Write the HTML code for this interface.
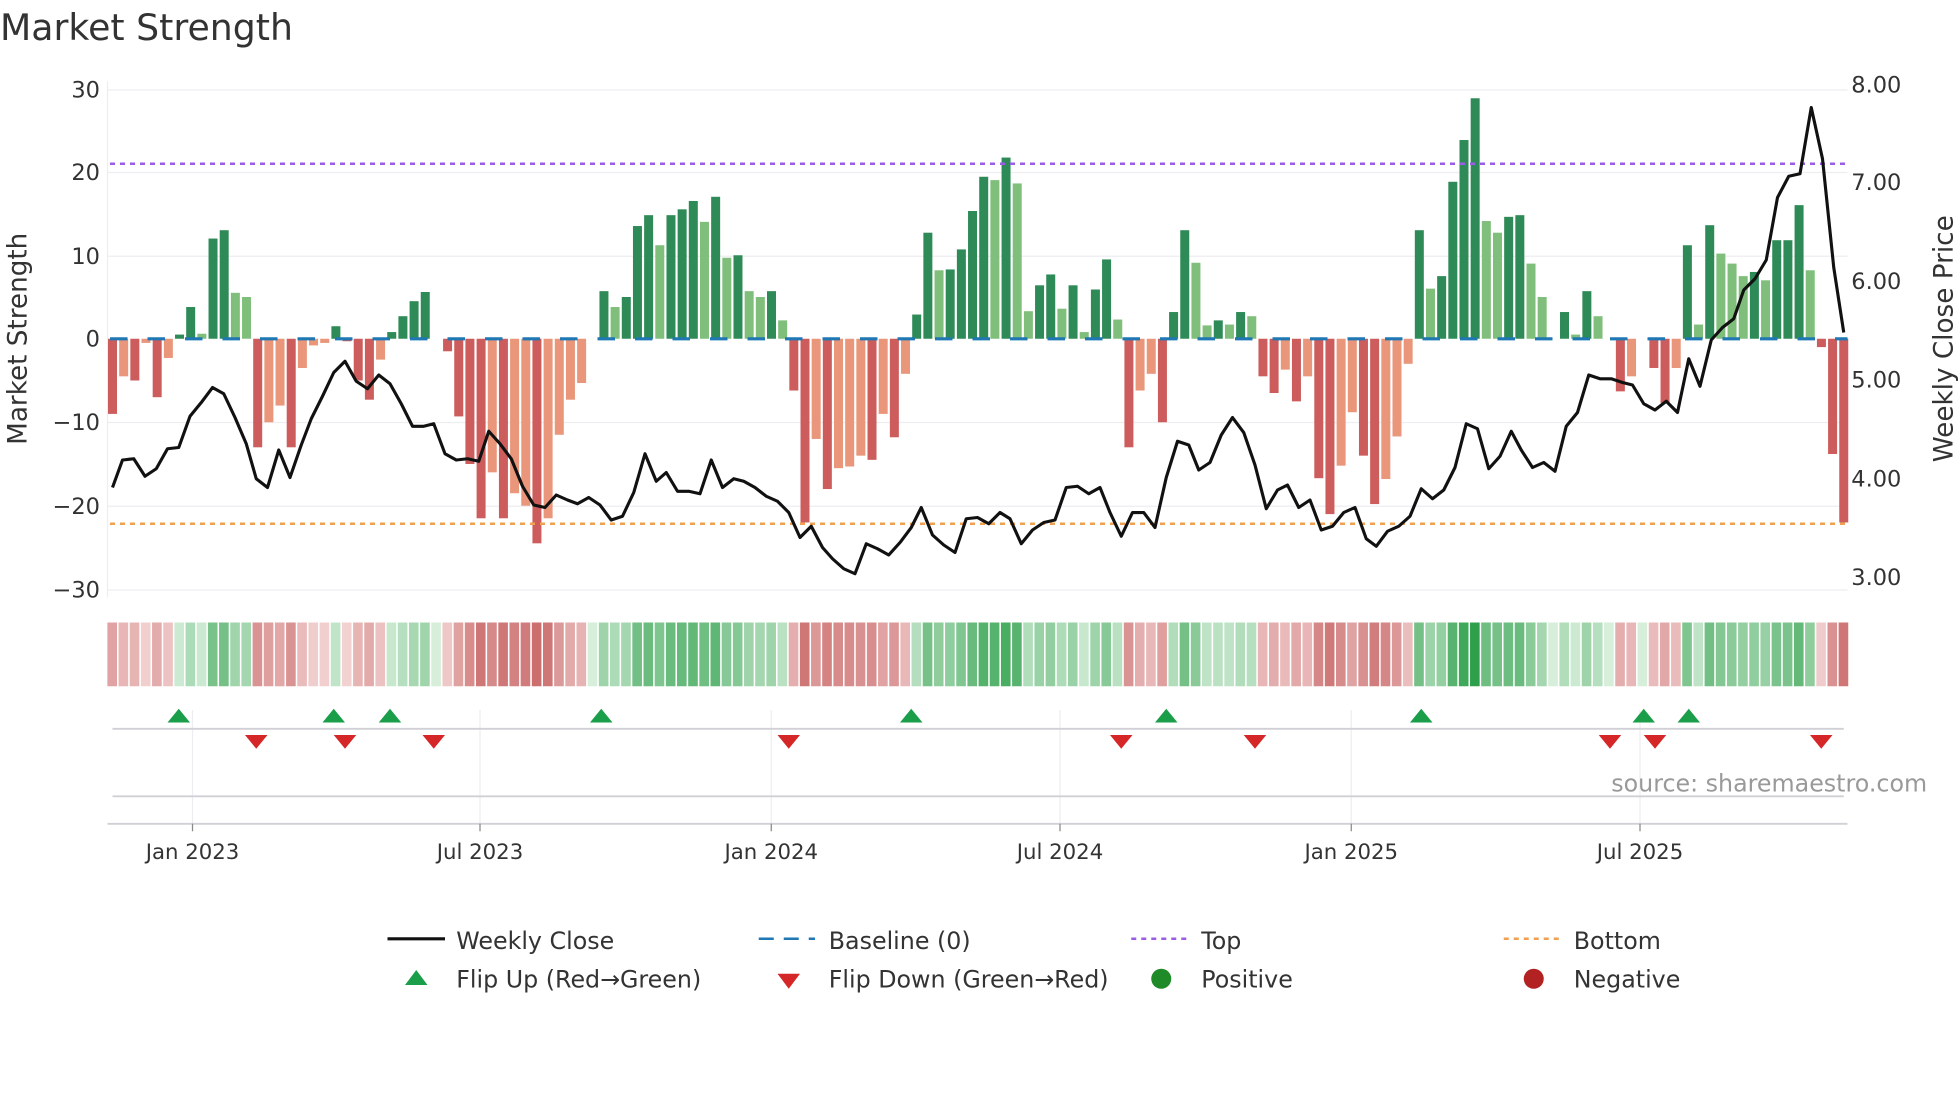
<!DOCTYPE html>
<html><head><meta charset="utf-8">
<style>
html,body{margin:0;padding:0;background:#fff;width:1960px;height:1102px;overflow:hidden}
svg{display:block}
text{font-family:"DejaVu Sans","Liberation Sans",sans-serif;fill:#333}
</style></head>
<body>
<svg id="s" width="1960" height="1102" viewBox="0 0 1568 881.6" xmlns="http://www.w3.org/2000/svg">
<text x="0" y="32" font-size="29">Market Strength</text>
<g stroke="#eeeef2" stroke-width="1">
<line x1="86" y1="72" x2="1478" y2="72"/><line x1="86" y1="138" x2="1478" y2="138"/>
<line x1="86" y1="205" x2="1478" y2="205"/><line x1="86" y1="338" x2="1478" y2="338"/>
<line x1="86" y1="405" x2="1478" y2="405"/><line x1="86" y1="472" x2="1478" y2="472"/>
<line x1="86" y1="65" x2="86" y2="478"/>
<line x1="154" y1="568" x2="154" y2="660"/><line x1="384" y1="568" x2="384" y2="660"/>
<line x1="617" y1="568" x2="617" y2="660"/><line x1="848" y1="568" x2="848" y2="660"/>
<line x1="1081" y1="568" x2="1081" y2="660"/><line x1="1312" y1="568" x2="1312" y2="660"/>
</g>
<g font-size="18" text-anchor="end">
<text x="80" y="78">30</text><text x="80" y="144">20</text><text x="80" y="211">10</text>
<text x="80" y="277">0</text><text x="80" y="344">−10</text><text x="80" y="411">−20</text><text x="80" y="478">−30</text>
</g>
<g font-size="18">
<text x="1481" y="74">8.00</text><text x="1481" y="152">7.00</text><text x="1481" y="231">6.00</text>
<text x="1481" y="310">5.00</text><text x="1481" y="389">4.00</text><text x="1481" y="468">3.00</text>
</g>
<text transform="translate(21,271) rotate(-90)" font-size="21" text-anchor="middle">Market Strength</text>
<text transform="translate(1562,271) rotate(-90)" font-size="21" text-anchor="middle">Weekly Close Price</text>
<g id="bars"></g>
<line x1="88" y1="271" x2="1478" y2="271" stroke="#1f77b4" stroke-width="2.5" stroke-dasharray="14,16"/>
<line x1="88" y1="131" x2="1478" y2="131" stroke="#9b5de5" stroke-width="2" stroke-dasharray="4,4"/>
<line x1="88" y1="419" x2="1478" y2="419" stroke="#f0a050" stroke-width="2" stroke-dasharray="4,4"/>
<polyline id="price" fill="none" stroke="#111" stroke-width="2.5" stroke-linejoin="round"/>
<g id="heat"></g>
<line x1="90" y1="583" x2="1475" y2="583" stroke="#d0d0d6" stroke-width="1.5"/>
<line x1="90" y1="637" x2="1475" y2="637" stroke="#d0d0d6" stroke-width="1.5"/>
<line x1="86" y1="659" x2="1478" y2="659" stroke="#d0d0d6" stroke-width="1.5"/>
<g id="flips"></g>
<text x="1289" y="633" font-size="19" style="fill:#999">source: sharemaestro.com</text>
<g stroke="#888" stroke-width="1">
<line x1="154" y1="659" x2="154" y2="665"/><line x1="384" y1="659" x2="384" y2="665"/><line x1="617" y1="659" x2="617" y2="665"/>
<line x1="848" y1="659" x2="848" y2="665"/><line x1="1081" y1="659" x2="1081" y2="665"/><line x1="1312" y1="659" x2="1312" y2="665"/>
</g>
<g font-size="17" text-anchor="middle">
<text x="154" y="687">Jan 2023</text><text x="384" y="687">Jul 2023</text><text x="617" y="687">Jan 2024</text>
<text x="848" y="687">Jul 2024</text><text x="1081" y="687">Jan 2025</text><text x="1312" y="687">Jul 2025</text>
</g>
<g font-size="19">
<line x1="310" y1="751" x2="356" y2="751" stroke="#111" stroke-width="2.5"/><text x="365" y="759">Weekly Close</text>
<line x1="607" y1="751" x2="652" y2="751" stroke="#1f77b4" stroke-width="2" stroke-dasharray="12,8"/><text x="663" y="759">Baseline (0)</text>
<line x1="905" y1="751" x2="950" y2="751" stroke="#9b5de5" stroke-width="2" stroke-dasharray="4,4"/><text x="961" y="759">Top</text>
<line x1="1203" y1="751" x2="1248" y2="751" stroke="#f0a050" stroke-width="2" stroke-dasharray="4,4"/><text x="1259" y="759">Bottom</text>
<polygon points="324,788 342,788 333,776" fill="#1a9e4a"/><text x="365" y="790">Flip Up (Red→Green)</text>
<polygon points="622,779 640,779 631,791" fill="#d62728"/><text x="663" y="790">Flip Down (Green→Red)</text>
<circle cx="929" cy="783" r="8" fill="#1e8a28"/><text x="961" y="790">Positive</text>
<circle cx="1227" cy="783" r="8" fill="#b22222"/><text x="1259" y="790">Negative</text>
</g>
</svg>
<script>
var NS="http://www.w3.org/2000/svg";
function el(t,a,p){var e=document.createElementNS(NS,t);for(var k in a)e.setAttribute(k,a[k]);p.appendChild(e);return e;}
var B=[[-9,1],[-4.5,0],[-5,1],[-0.5,0],[-7,1],[-2.3,0],[0.5,1],[3.8,1],[0.6,0],[12,1],[13,1],[5.5,0],[5,0],
[-13,1],[-10,0],[-8,0],[-13,1],[-3.5,0],[-0.8,0],[-0.5,0],[1.5,1],[-0.3,1],[-5,1],[-7.3,1],[-2.5,0],[0.8,1],[2.7,1],[4.5,1],[5.6,1],[0,1],
[-1.5,1],[-9.3,1],[-15,1],[-21.5,1],[-16,0],[-21.5,1],[-18.5,0],[-20,0],[-24.5,1],[-21.5,0],[-11.5,0],[-7.3,0],[-5.3,0],[0,1],
[5.7,1],[3.8,0],[5,1],[13.5,1],[14.8,1],[11.2,0],[14.8,1],[15.5,1],[16.5,1],[14,0],[17,1],[9.7,0],[10,1],[5.7,0],[5,0],[5.7,1],[2.2,0],
[-6.2,1],[-22,1],[-12,0],[-18,1],[-15.5,0],[-15.3,0],[-14,0],[-14.5,1],[-9,0],[-11.8,1],[-4.2,0],
[2.9,1],[12.7,1],[8.2,0],[8.3,1],[10.7,1],[15.3,1],[19.4,1],[19,0],[21.7,1],[18.6,0],[3.3,0],[6.4,1],[7.7,1],[3.6,0],[6.4,1],[0.8,0],[5.9,1],[9.5,1],[2.3,0],
[-13,1],[-6.2,0],[-4.2,0],[-10,1],
[3.2,1],[13,1],[9.1,0],[1.6,0],[2.2,1],[1.7,0],[3.2,1],[2.7,0],
[-4.5,1],[-6.5,1],[-3.7,0],[-7.5,1],[-4.5,0],[-16.7,1],[-21,1],[-15.2,0],[-8.8,0],[-14,1],[-19.8,1],[-16.8,0],[-11.7,0],[-3,0],
[13,1],[6,0],[7.5,1],[18.8,1],[23.8,1],[28.8,1],[14.1,0],[12.7,0],[14.6,1],[14.8,1],[9,0],[5,0],[0,1],[3.2,1],[0.5,0],[5.7,1],[2.7,0],[0,1],
[-6.3,1],[-4.5,0],[0,1],[-3.5,1],[-7.7,1],[-3.5,0],
[11.2,1],[1.7,0],[13.6,1],[10.2,0],[9,0],[7.5,0],[8,1],[7,0],[11.8,1],[11.8,1],[16,1],[8.2,0],[-1,1],[-13.8,1],[-22,1]];
var n=B.length, x0=90, x1=1475, dx=(x1-x0)/(n-1);
var gb=document.getElementById("bars"), gh=document.getElementById("heat");
B.forEach(function(b,i){
 var x=x0+i*dx, v=b[0], h=Math.abs(v)*6.68, y=v>=0?271-h:271;
 var c=v>=0?(b[1]?"#2e8b57":"#7fbf7b"):(b[1]?"#cd5c5c":"#e9967a");
 if(h>0.1) el("rect",{x:x-3.6,y:y,width:7.2,height:h,fill:c},gb);
 var t=Math.min(Math.abs(v)/28,1), col;
 if(v>=0){var a=[214,238,218],z=[46,160,75];}else{var a=[244,214,214],z=[200,100,100];}
 t=Math.pow(t,0.7);
 col="rgb("+[0,1,2].map(function(k){return Math.round(a[k]+(z[k]-a[k])*t)}).join(",")+")";
 el("rect",{x:x-4.1,y:498,width:7.7,height:51,fill:col},gh);
});
var P=[[90,390],[98,368],[107,367],[116,381],[125,375],[134,359],[143,358],[152,333],[161,322],[170,310],[179,315],[188,334],[197,355],[205,383],[214,390],[223,360],[232,382],[241,356],[249,335],[258,317],[267,298],[276,289],[285,305],[294,311],[303,300],[312,307],[321,323],[330,341],[339,341],[347,339],[356,363],[365,368],[374,367],[383,369],[391,345],[400,355],[409,367],[418,389],[427,404],[436,406],[445,396],[454,400],[462,403],[471,398],[480,404],[489,416],[498,413],[507,394],[516,363],[525,385],[533,378],[542,393],[551,393],[560,395],[569,368],[578,390],[587,383],[595,385],[604,390],[613,397],[622,401],[631,410],[640,430],[649,421],[658,438],[666,447],[675,455],[684,459],[693,435],[702,439],[711,444],[720,434],[729,422],[737,406],[746,428],[755,436],[764,442],[773,415],[782,414],[791,419],[800,410],[808,415],[817,435],[826,424],[835,418],[844,416],[853,390],[862,389],[871,395],[880,390],[888,410],[897,429],[906,410],[915,410],[924,422],[933,382],[942,353],[951,356],[959,376],[968,370],[977,348],[986,334],[995,346],[1004,372],[1013,407],[1022,392],[1030,388],[1039,406],[1048,400],[1057,424],[1066,421],[1075,410],[1084,406],[1093,431],[1101,437],[1110,425],[1119,421],[1128,413],[1137,391],[1146,399],[1155,392],[1164,374],[1173,339],[1182,343],[1191,375],[1200,365],[1209,345],[1217,360],[1226,374],[1235,370],[1244,377],[1253,341],[1262,330],[1271,300],[1280,303],[1289,303],[1298,306],[1306,308],[1315,323],[1324,328],[1333,321],[1342,330],[1351,287],[1360,309],[1369,272],[1378,262],[1387,255],[1395,232],[1404,223],[1413,208],[1422,158],[1431,141],[1440,139],[1449,86],[1458,127],[1467,214],[1475,266]];
document.getElementById("price").setAttribute("points",P.map(function(p){return p.join(",")}).join(" "));
var gf=document.getElementById("flips");
[143,267,312,481,729,933,1137,1315,1351].forEach(function(x){el("polygon",{points:(x-9)+",578 "+(x+9)+",578 "+x+",567",fill:"#1a9e4a"},gf);});
[205,276,347,631,897,1004,1288,1324,1457].forEach(function(x){el("polygon",{points:(x-9)+",588 "+(x+9)+",588 "+x+",599",fill:"#d62728"},gf);});
</script>
</body></html>
